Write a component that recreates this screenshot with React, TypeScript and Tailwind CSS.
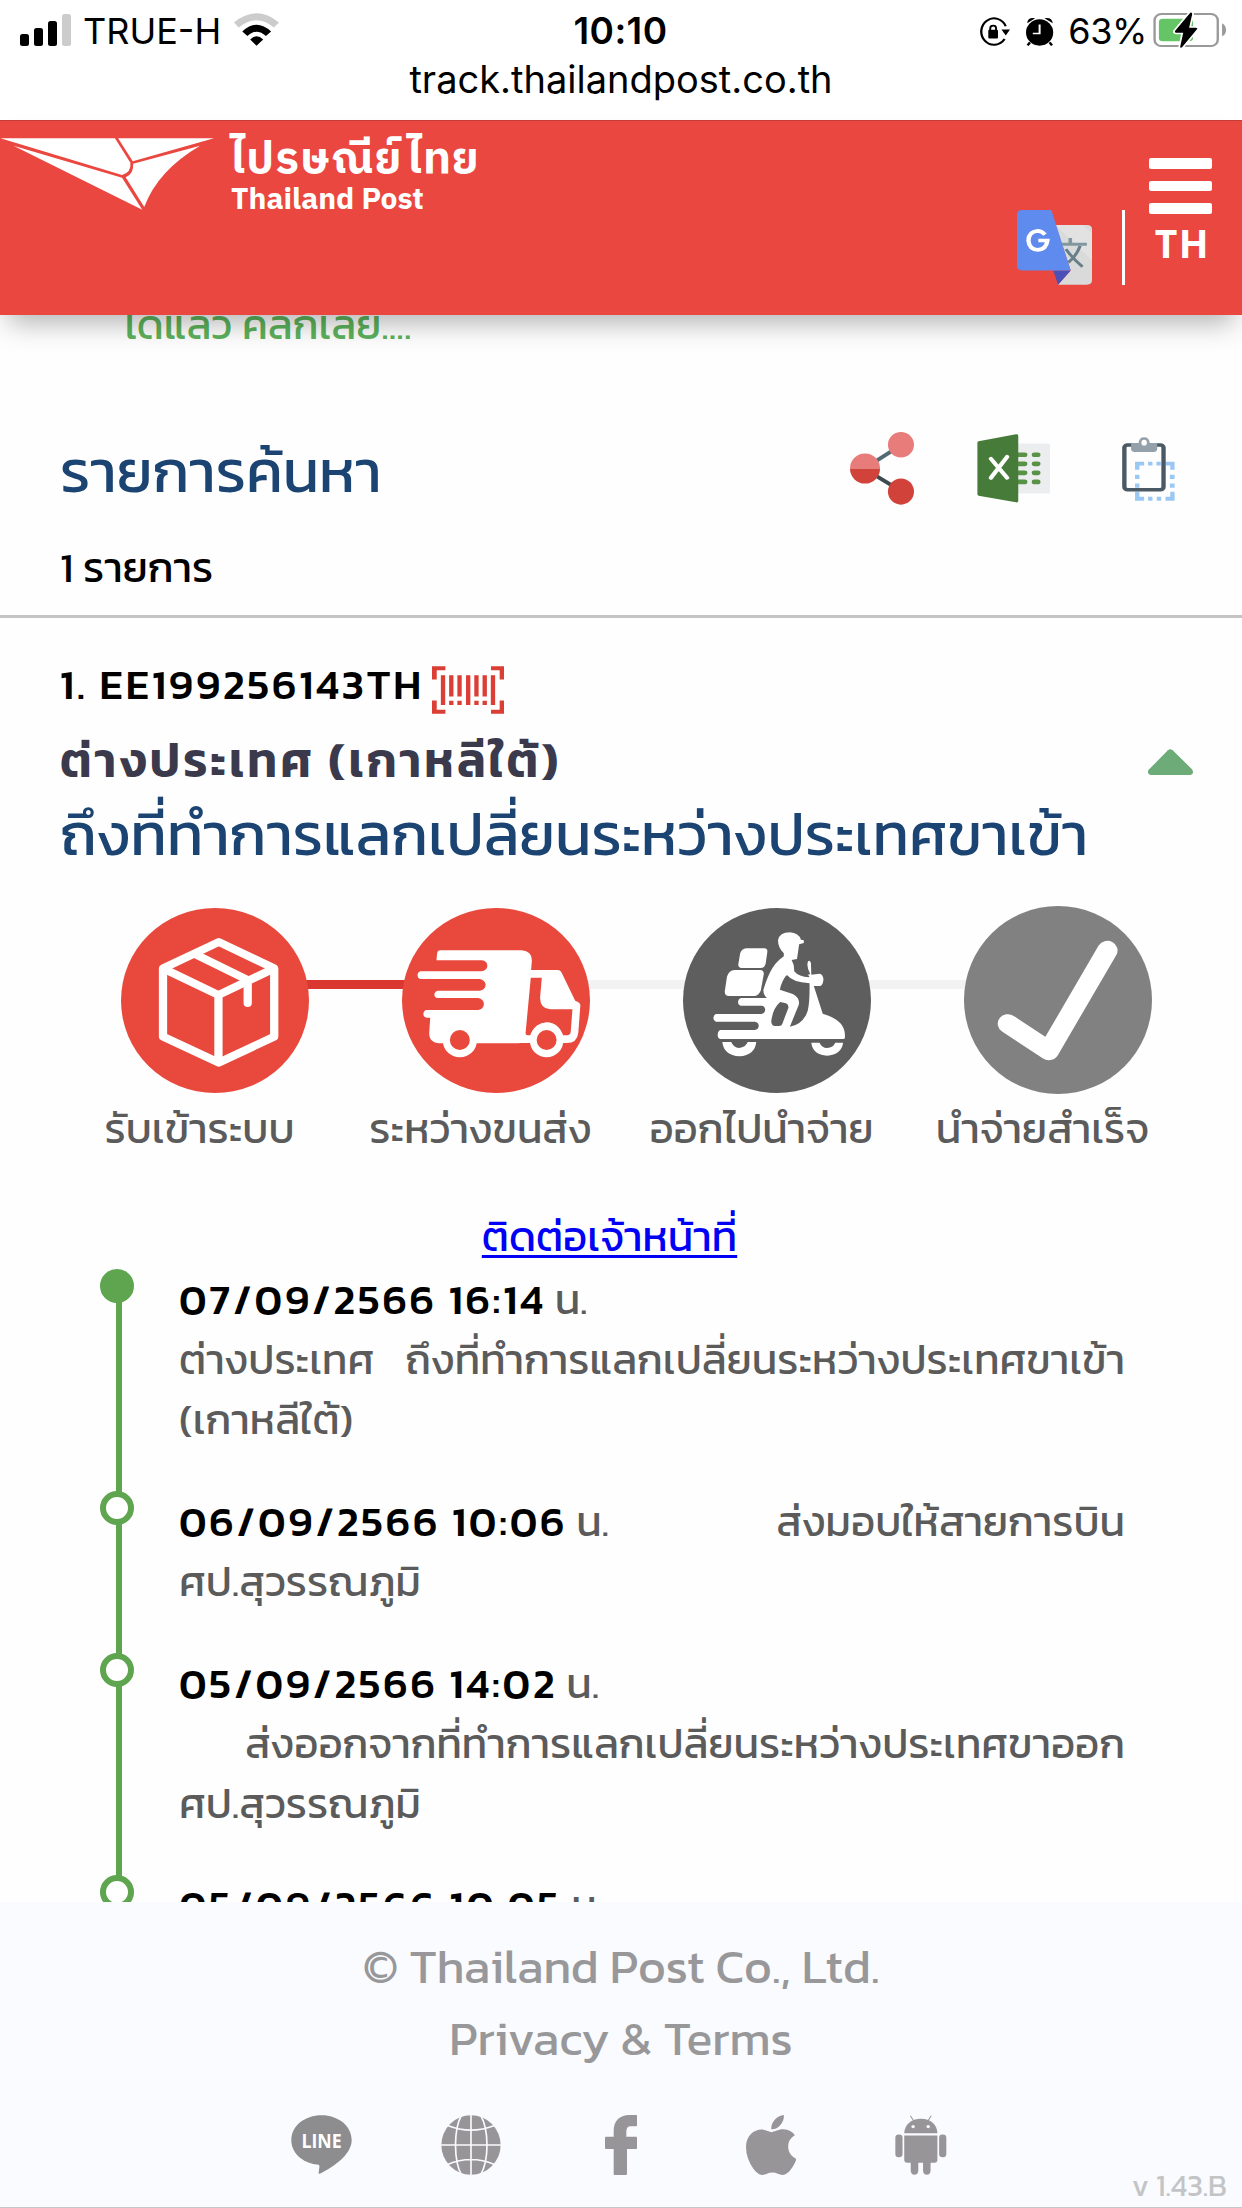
import type { ReactNode } from 'react';

function Art({ box, className, children }: { box: string; className: string; children: ReactNode }) {
  return (
    <svg viewBox={box} preserveAspectRatio="none" className={`block shrink-0 ${className}`} fill="none">
      {children}
    </svg>
  );
}

function StatusBar() {
  return (
    <div className="h-[120px] bg-white text-black font-['Inter','Liberation_Sans',sans-serif] font-normal">
      <div className="grid grid-cols-[1fr_auto_1fr] items-center h-[62px] pl-[20px] pr-[16px]">
        <div className="flex items-center">
          <Art box="0 0 51 32" className="w-[51px] h-[32px] mb-[2px]">
            <rect x="0" y="20" width="9" height="12" rx="2.5" fill="#000" />
            <rect x="14" y="14" width="9" height="18" rx="2.5" fill="#000" />
            <rect x="28" y="7" width="9" height="25" rx="2.5" fill="#000" />
            <rect x="42" y="0" width="9" height="32" rx="2.5" fill="#ccc" />
          </Art>
          <span className="ml-[12px] text-[36px] leading-[62px]">TRUE-H</span>
          <Art box="592 38 114 100" className="w-[45px] h-[33px] ml-[13px] mb-[3px]">
            <path d="M592 67Q649 11 706 67L693 82Q649 38 604 82Z" fill="#ccc" />
            <path d="M613 94Q649 53 686 94L673 108Q649 82 626 108Z" fill="#000" />
            <path d="M633 118Q649 99 666 118L649 137Z" fill="#000" />
          </Art>
        </div>
        <span className="-ml-[5px] text-[37px] leading-[62px] tracking-[0.4px] font-semibold">10:10</span>
        <div className="flex items-center justify-end">
          <Art box="903 50 80 88" className="w-[31px] h-[29px]">
            <path d="M972 78A33 40 0 1 0 969 117" stroke="#000" strokeWidth="6" />
            <path d="M961 88H983L972 106Z" fill="#000" />
            <rect x="927" y="89" width="25" height="26" rx="3" fill="#000" />
            <path d="M932 90V84Q932 76 940 76Q947 76 947 84V90" stroke="#000" strokeWidth="5" />
          </Art>
          <Art box="1024 47 70 88" className="w-[28px] h-[29px] ml-[16px]">
            <ellipse cx="1058" cy="94" rx="34" ry="40" fill="#000" />
            <path d="M1027 66Q1028 47 1047 51ZM1091 66Q1089 47 1070 51Z" fill="#000" />
            <path d="M1034 124L1028 133M1083 124L1089 133" stroke="#000" strokeWidth="6" />
            <path d="M1058 70V97H1041" stroke="#fff" strokeWidth="5" />
          </Art>
          <span className="ml-[14px] text-[36px] leading-[62px] tracking-[-0.4px]">63%</span>
          <Art box="1342 36 186 108" className="w-[73px] h-[36px] ml-[6px] mb-[2px]">
            <rect x="1346" y="42" width="161" height="96" rx="17" ry="19" stroke="#999" strokeWidth="6" />
            <path d="M1518 70Q1528 76 1528 90Q1528 104 1518 109Z" fill="#999" />
            <rect x="1357" y="56" width="87" height="68" rx="10" fill="#65c466" />
            <path d="M1437 38L1398 93Q1396 98 1401 98H1419L1411 142Q1413 144 1416 142L1454 88Q1457 83 1451 83H1434L1442 42Q1441 37 1437 38Z" fill="#000" stroke="#fff" strokeWidth="9" paintOrder="stroke" />
          </Art>
        </div>
      </div>
      <div className="text-center text-[38px] leading-[34px]">track.thailandpost.co.th</div>
    </div>
  );
}

function Header() {
  return (
    <header className="relative z-10 flex justify-between h-[195px] bg-[#ea4740] border-t border-[#c43c37] shadow-[0_16px_26px_-8px_rgba(0,0,0,0.3)] text-white">
      <div className="flex">
        <Art box="0 413 540 216" className="w-[214px] h-[72px] mt-[17px]">
          <g fill="#fff">
            <path d="M1 414H290L329 487Q332 515 308 524Z" />
            <path d="M298 414H540L335 483Z" />
            <path d="M34 436L308 532L359 628Z" />
            <path d="M336 490L505 436Q398 510 364 620L317 531Q338 520 336 490Z" />
          </g>
        </Art>
        <div className="ml-[17px] mt-[14px] font-['IBM_Plex_Sans_Thai','Noto_Sans_Thai','Noto_Sans',sans-serif] font-bold whitespace-nowrap">
          <div className="text-[44px] leading-[50px] h-[50px] tracking-[1.2px]">ไปรษณีย์ไทย</div>
          <div className="-mt-px text-[30px] leading-[34px] font-['IBM_Plex_Sans_Thai','IBM_Plex_Sans','Noto_Sans',sans-serif]">Thailand Post</div>
        </div>
      </div>
      <div className="flex">
        <Art box="1000 630 190 226" className="w-[75px] h-[75px] mt-[89px]">
          <path d="M1098 675H1177Q1190 675 1190 687V842Q1190 855 1177 855H1104L1136 812Z" fill="#dadada" />
          <path d="M1098 675L1190 782V700L1165 675Z" fill="#e2e2e2" />
          <path d="M1092 812H1136L1104 855Z" fill="#4a50b5" />
          <path d="M1014 630H1087L1136 812H1014Q1000 812 1000 798V644Q1000 630 1014 630Z" fill="#5f8bee" />
          <path d="M1071 704Q1062 693 1052 693Q1029 696 1029 722Q1031 749 1053 750Q1074 749 1077 722H1054" stroke="#fff" strokeWidth="11" />
          <path d="M1114 733H1177M1135 714V733" stroke="#8097a0" strokeWidth="9" />
          <path d="M1160 738Q1150 770 1130 788M1124 748Q1140 775 1166 801" stroke="#667f89" strokeWidth="8" />
        </Art>
        <div className="w-[3px] h-[75px] mt-[89px] ml-[30px] bg-white" />
        <div className="flex flex-col items-center ml-[24px] mr-[30px] mt-[37px] w-[63px]">
          <div className="flex flex-col gap-[12px]">
            <div className="w-[63px] h-[11px] rounded-[2px] bg-white" />
            <div className="w-[63px] h-[10px] rounded-[2px] bg-white" />
            <div className="w-[63px] h-[11px] rounded-[2px] bg-white" />
          </div>
          <div className="mt-[10px] pl-[4px] text-[39px] leading-[38px] font-bold tracking-[1.5px] font-['Open_Sans',sans-serif]">TH</div>
        </div>
      </div>
    </header>
  );
}

function ActionIcons() {
  return (
    <div className="flex items-start mr-[68px] mt-[6px]">
      <Art box="578 95 162 218" className="w-[64px] h-[73px]">
        <path d="M630 192L700 140" stroke="#546a73" strokeWidth="11" />
        <path d="M630 216L700 266" stroke="#3c4a4f" strokeWidth="11" />
        <ellipse cx="707" cy="133" rx="33" ry="38" fill="#e77c7a" />
        <ellipse cx="707" cy="273" rx="33" ry="39" fill="#d1423a" />
        <path d="M578 204A38 45 0 0 1 654 204Z" fill="#e77c7a" />
        <path d="M578 204A38 45 0 0 0 654 204Z" fill="#d1423a" />
      </Art>
      <Art box="900 101 184 206" className="w-[73px] h-[69px] mt-[2px] ml-[63px]">
        <rect x="990" y="129" width="94" height="150" rx="5" fill="#ecedef" />
        <g stroke="#579247" strokeWidth="14" strokeLinecap="round">
          <path d="M1000 163H1020M1045 163H1053M1000 190H1020M1045 190H1053M1000 217H1020M1045 217H1053M1000 244H1020M1045 244H1053" />
        </g>
        <path d="M904 123L998 102Q1004 101 1004 106V301Q1004 306 998 305L904 285Q901 284 901 281V127Q901 124 904 123Z" fill="#477b3a" />
        <path d="M935 175L976 232M976 169L935 232" stroke="#fff" strokeWidth="11" strokeLinecap="round" />
      </Art>
      <Art box="1266 111 134 193" className="w-[53px] h-[64px] mt-[5px] ml-[72px] -mr-px">
        <path d="M1299 186H1322V197H1310V210H1299ZM1376 186H1399V210H1388V197H1376ZM1299 276H1310V291H1322V303H1299ZM1388 276H1399V303H1376V291H1388ZM1332 186H1343V197H1332ZM1353 186H1364V197H1353ZM1332 291H1343V303H1332ZM1354 291H1365V303H1354ZM1299 225H1310V238H1299ZM1299 251H1310V264H1299ZM1387 225H1399V238H1387ZM1387 251H1399V264H1387Z" fill="#9bc7f3" />
        <rect x="1272" y="135" width="99" height="135" rx="8" stroke="#4a5963" strokeWidth="11" />
        <path d="M1289 129H1308Q1309 112 1322 112Q1335 112 1336 129H1355V148Q1354 156 1346 156H1298Q1290 156 1289 148Z" fill="#94a1ab" />
        <ellipse cx="1322" cy="128" rx="7" ry="9" fill="#fff" />
      </Art>
    </div>
  );
}

function BoxStep() {
  return (
    <Art box="90 84 546 555" className="w-[188px] h-[185px]">
      <ellipse cx="363" cy="361.5" rx="273" ry="277.5" fill="#e9493d" />
      <g stroke="#fff" strokeLinejoin="round" strokeWidth="24">
        <path d="M374 186L535 265V470L374 548L212 470V265Z" />
        <path d="M212 265L373 345L535 265M373 345V548" />
        <path d="M310 225L458 300V369" strokeLinecap="round" />
      </g>
    </Art>
  );
}

function TruckStep() {
  return (
    <Art box="906 84 546 555" className="w-[188px] h-[185px]">
      <ellipse cx="1179" cy="361.5" rx="273" ry="277.5" fill="#e9493d" />
      <path d="M1006 241L1008 220Q1009 211 1018 211H1254Q1285 214 1283 244L1281 270H1358Q1366 270 1369 277L1409 362Q1424 367 1424 376L1418 458Q1415 489 1384 489H1252Q1242 490 1228 490H1020Q984 490 985 458L988 413H978Q968 411 968 402Q969 391 978 390H1128Q1143 387 1144 372Q1143 358 1128 354H1010Q1000 352 1000 344Q1001 334 1010 332H1132Q1148 329 1149 314Q1147 300 1132 297H960Q951 295 951 286Q952 276 960 274H1136Q1153 271 1154 257Q1153 243 1138 241Z" fill="#fff" />
      <path d="M1280 293H1312L1307 354Q1308 386 1336 388H1401L1396 456Q1395 465 1386 466H1373Q1360 428 1327 427Q1293 429 1279 466H1271Q1264 465 1265 458Z" fill="#e9493d" />
      <ellipse cx="1074" cy="480" rx="50" ry="52" fill="#fff" />
      <ellipse cx="1074" cy="480" rx="29" ry="30" fill="#e9493d" />
      <ellipse cx="1326" cy="480" rx="49" ry="52" fill="#fff" />
      <ellipse cx="1326" cy="480" rx="29" ry="30" fill="#e9493d" />
    </Art>
  );
}

function ScooterStep() {
  return (
    <Art box="146 84 526 555" className="w-[188px] h-[185px]">
      <ellipse cx="409" cy="361.5" rx="263" ry="277.5" fill="#5e5e5e" />
      <g fill="#fff">
        <path d="M323 205H374Q383 206 382 216L377 252Q374 264 363 264H310Q299 263 301 251L306 220Q310 206 323 205Z" />
        <path d="M290 270H362Q373 271 372 282L364 330Q359 347 346 348H275Q262 347 263 334L269 290Q275 271 290 270Z" />
        <path d="M428 220Q411 203 412 180Q416 158 445 157Q470 159 476 179L484 181V189L471 193L465 237L450 240Q458 255 457 274Q470 291 499 292V287L494 285L502 282Q490 258 496 244Q500 238 504 249L505 284L528 281Q538 283 539 298Q538 315 530 318H512L537 401Q596 419 599 462V473Q599 477 594 477H250Q243 475 243 464Q244 452 251 450H347Q357 448 358 437Q357 427 347 425H238Q231 423 231 414Q232 404 238 402H365Q375 400 376 389Q375 378 366 377H308Q300 375 300 366Q301 356 309 354H381Q370 344 371 329C381 298 392 254 428 229Z" />
        <path d="M256 486H281Q287 503 303 504Q321 502 327 486H351Q347 526 304 529Q260 526 256 486ZM505 488H528Q534 503 549 504Q567 502 572 488H594Q589 524 549 527Q509 524 505 488Z" />
      </g>
      <g fill="#5e5e5e">
        <path d="M438 286Q451 306 500 310Q501 365 495 392Q482 434 445 440L470 374Q474 354 453 342L417 329Q421 306 434 287Z" />
        <path d="M418 366L434 370Q442 374 441 383L424 431Q422 438 415 438H402Q393 436 393 424Q397 385 418 366Z" />
      </g>
    </Art>
  );
}

function DoneStep() {
  return (
    <Art box="935 78 527 564" className="w-[188px] h-[188px] -mt-[2px] -mb-px">
      <ellipse cx="1198.5" cy="360" rx="263.5" ry="282" fill="#818181" />
      <path d="M1058 431L1173 512L1337 211" stroke="#fff" strokeWidth="57" strokeLinecap="round" strokeLinejoin="round" />
    </Art>
  );
}

const steps: { label: string; art: ReactNode }[] = [
  { label: 'รับเข้าระบบ', art: <BoxStep /> },
  { label: 'ระหว่างขนส่ง', art: <TruckStep /> },
  { label: 'ออกไปนำจ่าย', art: <ScooterStep /> },
  { label: 'นำจ่ายสำเร็จ', art: <DoneStep /> },
];

function Steps() {
  return (
    <div className="relative mt-[38px] -ml-px grid grid-cols-4 w-[1124px]">
      <div className="absolute left-[200px] top-[72px] h-[9px] w-[200px] bg-[#d9372f]" />
      <div className="absolute left-[480px] top-[72px] h-[9px] w-[500px] bg-[#f2f2f2]" />
      {steps.map((s) => (
        <div key={s.label} className="relative flex flex-col items-center">
          <div className="pl-[31px]">{s.art}</div>
          <div className="mt-[6px] text-[42px] leading-[60px] text-[#5b5b5b] whitespace-nowrap">{s.label}</div>
        </div>
      ))}
    </div>
  );
}

const events = [
  { date: '07/09/2566 16:14', rows: [['ต่างประเทศ', 'ถึงที่ทำการแลกเปลี่ยนระหว่างประเทศขาเข้า'], ['(เกาหลีใต้)']] },
  { date: '06/09/2566 10:06', side: 'ส่งมอบให้สายการบิน', rows: [['ศป.สุวรรณภูมิ']] },
  { date: '05/09/2566 14:02', rows: [['', 'ส่งออกจากที่ทำการแลกเปลี่ยนระหว่างประเทศขาออก'], ['ศป.สุวรรณภูมิ']] },
  { date: '05/09/2566 10:05', rows: [['ศป.สุวรรณภูมิ']] },
];

function Timeline() {
  return (
    <div className="mt-[2px] ml-[40px] w-[1025px]">
      {events.map((e, i) => (
        <div key={e.date} className="flex">
          <div className="flex flex-col w-[34px] shrink-0">
            <div className={`w-[34px] h-[34px] shrink-0 rounded-full border-[6px] border-[#5fa550] ${i === 0 ? 'bg-[#5fa550]' : 'bg-white'}`} />
            <div className="w-[6px] ml-[16px] -my-px flex-1 bg-[#5fa550]" />
          </div>
          <div className="flex-1 ml-[45px] pt-px pb-[41px] text-[42px] leading-[60px] text-[#5b5b5b] whitespace-nowrap">
            <div className="flex justify-between">
              <span className="flex">
                <b className="font-medium tracking-[2.8px] text-black">{e.date}</b>
                <span className="ml-[9px]">น.</span>
              </span>
              {e.side && <span>{e.side}</span>}
            </div>
            {e.rows.map((r) => (
              <div key={r.join()} className="flex justify-between">
                {r.map((t) => (
                  <span key={t}>{t}</span>
                ))}
              </div>
            ))}
          </div>
        </div>
      ))}
    </div>
  );
}

function Footer() {
  return (
    <footer className="relative h-[306px] shrink-0 bg-[#fafbfe] border-b border-[#c6c6c6] pt-[28px] text-center text-[#98989b]">
      <div className="text-[48px] leading-[72px]">© Thailand Post Co., Ltd.</div>
      <div className="text-[48px] leading-[72px]">Privacy &amp; Terms</div>
      <div className="grid grid-cols-[repeat(5,150px)] justify-center justify-items-center mt-[41px]">
        <Art box="152 647 182 176" className="w-[61px] h-[59px]">
          <path d="M243 648C293 648 333 680 333 722C333 765 278 802 238 822Q233 823 235 816L237 799Q236 795 230 795C185 789 153 759 153 722C153 680 193 648 243 648Z" fill="#8d8d8f" />
          <text x="243" y="746" textAnchor="middle" textLength="120" lengthAdjust="spacingAndGlyphs" fontSize="60" fontWeight="700" fontFamily="Open Sans, sans-serif" fill="#fff">LINE</text>
        </Art>
        <Art box="602 644 182 182" className="w-[60px] h-[60px]">
          <circle cx="693" cy="735" r="90" fill="#989598" />
          <path d="M693 644V826M602 735H784M664 644C640 690 640 780 664 826M722 644C748 690 748 780 722 826M622 676Q693 704 764 676M622 794Q693 764 764 794" stroke="#fafbfe" strokeWidth="5" />
        </Art>
        <Art box="1095 645 96 180" className="w-[32px] h-[60px]">
          <path d="M1188 645H1168C1138 645 1121 664 1121 692V710H1098Q1095 710 1095 713V743Q1095 747 1098 747H1121V822Q1121 825 1124 825H1157Q1161 825 1161 822V747H1188Q1191 747 1191 743V713Q1191 710 1188 710H1159V696Q1159 680 1170 679H1188Q1191 679 1191 676V648Q1191 645 1188 645Z" fill="#989598" />
        </Art>
        <Art box="4 32 372.8 448" className="w-[50px] h-[60px]">
          <path fill="#989598" d="M318.7 268.7c-.2-36.7 16.4-64.4 50-84.8-18.8-26.9-47.2-41.7-84.7-44.6-35.5-2.8-74.3 20.7-88.5 20.7-15 0-49.4-19.7-76.4-19.7C63.3 141.2 4 184.8 4 273.5q0 39.3 14.4 81.2c12.8 36.7 59 126.7 107.2 125.2 25.2-.6 43-17.9 75.8-17.9 31.8 0 48.3 17.9 76.4 17.9 48.6-.7 90.4-82.5 102.6-119.3-65.2-30.7-61.7-90-61.7-91.9zm-56.6-164.2c27.3-32.4 24.8-61.9 24-72.5-24.1 1.4-52 16.4-67.9 34.9-17.5 19.8-27.8 44.3-25.6 71.9 26.1 2 49.9-11.4 69.5-34.3z" />
        </Art>
        <Art box="564 644 152 182" className="w-[52px] h-[60px]">
          <g fill="#989598">
            <path d="M591 699C592 672 612 655 640 655S687 672 688 699Z" />
            <path d="M591 706H688V779Q688 789 679 789H600Q591 789 591 779Z" />
            <rect x="565" y="703" width="21" height="69" rx="10" />
            <rect x="693" y="703" width="21" height="69" rx="10" />
            <path d="M610 785H632V814Q631 825 621 825Q611 825 610 814ZM646 785H668V814Q667 825 657 825Q647 825 646 814Z" />
          </g>
          <path d="M609 646L619 662M670 646L660 662" stroke="#989598" strokeWidth="3" />
          <circle cx="617" cy="679" r="5" fill="#fafbfe" />
          <circle cx="661" cy="679" r="5" fill="#fafbfe" />
        </Art>
      </div>
      <div className="absolute right-[15px] bottom-0 text-[30px] leading-[42px] text-[#c3c4c6]">v 1.43.B</div>
    </footer>
  );
}

export default function App() {
  return (
    <div className="flex flex-col w-[1242px] h-[2208px] overflow-hidden bg-[#fefefe] font-['Kanit','Prompt','Noto_Sans_Thai','Noto_Sans',sans-serif] font-normal">
      <StatusBar />
      <Header />
      <main className="flex-1 min-h-0 overflow-hidden">
        <div className="-mt-[20px] pl-[124px] text-[42px] leading-[60px] text-[#5cb25c]">ได้แล้ว คลิกเลย....</div>
        <div className="flex justify-between h-[90px] mt-[71px] pl-[60px]">
          <h1 className="text-[60px] leading-[90px] text-[#1b4472]">รายการค้นหา</h1>
          <ActionIcons />
        </div>
        <div className="mt-[22px] pl-[60px] text-[42px] leading-[60px] text-black">1 รายการ</div>
        <div className="mt-[17px] h-[3px] bg-[#c4c4c4]" />
        <section className="pl-[60px]">
          <div className="flex mt-[37px] h-[60px]">
            <span className="text-[42px] leading-[60px] font-medium tracking-[2.85px] text-black whitespace-nowrap">1. EE199256143TH</span>
            <Art box="1090 797 183 145" className="w-[72px] h-[48px] mt-[11px] ml-[8px]">
              <path d="M1124 804H1096V838M1240 804H1268V838M1096 901V935H1124M1268 901V935H1240" stroke="#da3e35" strokeWidth="12" />
              <path d="M1118 825V915M1182 825V915M1245 825V915M1139 825V889M1160 825V889M1203 825V889M1224 825V889M1139 902V915M1160 902V915M1203 902V915M1224 902V915" stroke="#da3e35" strokeWidth="11" />
            </Art>
          </div>
          <div className="flex justify-between mt-[9px] pr-[49px]">
            <span className="text-[48px] leading-[72px] font-semibold tracking-[3px] text-[#3b3a4c]">ต่างประเทศ (เกาหลีใต้)</span>
            <Art box="1331 1046 113 79" className="w-[45px] h-[26px] mt-[25px]">
              <path d="M1381 1050Q1387 1043 1393 1050L1442 1108Q1448 1124 1436 1125H1338Q1328 1122 1332 1110Z" fill="#6dab79" />
            </Art>
          </div>
          <div className="mt-[2px] text-[60px] leading-[72px] text-[#1b4472] whitespace-nowrap">ถึงที่ทำการแลกเปลี่ยนระหว่างประเทศขาเข้า</div>
          <Steps />
          <div className="mt-[48px] w-[1099px] text-center text-[42px] leading-[60px]">
            <a className="text-[#0000f5] underline decoration-[3px] underline-offset-[4px]" href="#contact">ติดต่อเจ้าหน้าที่</a>
          </div>
          <Timeline />
        </section>
      </main>
      <Footer />
    </div>
  );
}
